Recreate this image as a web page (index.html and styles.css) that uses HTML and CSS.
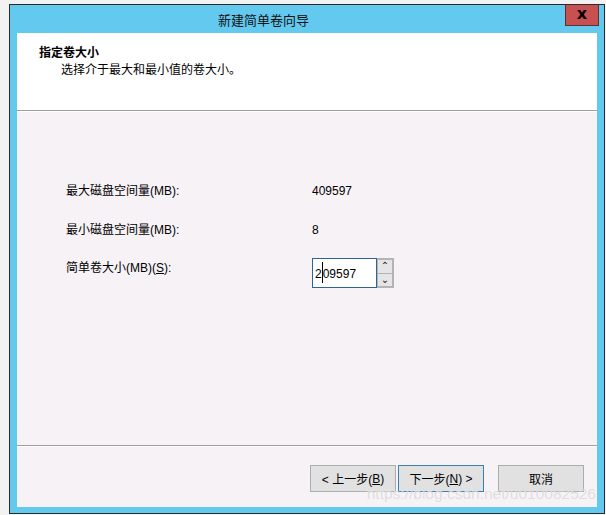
FILE: index.html
```html
<!DOCTYPE html>
<html lang="zh-CN">
<head>
    <meta charset="UTF-8">
    <title>新建简单卷向导</title>
    <link rel="stylesheet" href="styles.css">
</head>
<body>
    <!-- Окно мастера -->
    <div class="wizard">
        <div class="titlebar">
            <span class="title">新建简单卷向导</span>
            <span class="close">x</span>
        </div>
        <div class="content">
            <div class="header">
                <div class="header-title">指定卷大小</div>
                <div class="header-sub">选择介于最大和最小值的卷大小。</div>
            </div>
            <div class="main">
                <div class="row row-first">
                    <span class="label">最大磁盘空间量(MB):</span>
                    <span class="value">409597</span>
                </div>
                <div class="row row-second">
                    <span class="label">最小磁盘空间量(MB):</span>
                    <span class="value">8</span>
                </div>
                <div class="row row-third">
                    <span class="label label-size">简单卷大小(MB)(<u>S</u>):</span>
                    <div class="spinner">
                        <div class="spin-input">2<span class="caret"></span>09597</div>
                        <div class="spin-buttons">
                            <div class="spin-btn">&#8963;</div>
                            <div class="spin-btn">&#8964;</div>
                        </div>
                    </div>
                </div>
            </div>
            <div class="footer">
                <div class="btn btn-back">&lt; 上一步(<u>B</u>)</div>
                <div class="btn btn-next">下一步(<u>N</u>) &gt;</div>
                <div class="btn btn-cancel">取消</div>
                <div class="watermark">https://blog.csdn.net/u010082526</div>
            </div>
        </div>
    </div>
</body>
</html>
```

FILE: styles.css
```css
/* Body styling */
body {
    margin: 0;
    padding: 0;
    background: #f2f2f2;
    font-family: "Liberation Sans", "Noto Sans CJK SC", sans-serif;
    font-size: 12px;
    color: #000;
    overflow: hidden;
}

/* Wizard window */
.wizard {
    margin: 4px 0 0 9px;
    width: 596px;
    border: 1px solid #2b2b2b;
    background: #63c9ef;
    padding: 0 7px 6px 7px;
    box-sizing: border-box;
    height: 510px;
    display: flex;
    flex-direction: column;
}

.titlebar {
    height: 28px;
    display: flex;
    align-items: center;
    margin: 0 -7px;
}

.title {
    margin-left: 208px;
    font-size: 13px;
    color: #111;
}

.close {
    margin-left: auto;
    margin-right: 5px;
    align-self: flex-start;
    width: 34px;
    height: 21px;
    box-sizing: border-box;
    background: #c75050;
    border: 1px solid #5b3030;
    border-top: none;
    display: flex;
    align-items: center;
    justify-content: center;
    font-weight: bold;
    font-size: 16px;
    font-family: "DejaVu Sans", sans-serif;
    line-height: 1;
    padding-bottom: 3px;
}

/* Content */
.content {
    flex: 1;
    display: flex;
    flex-direction: column;
    background: #f6f2f6;
}

.header {
    height: 77px;
    background: #fff;
    border-bottom: 1px solid #a0a0a0;
    line-height: 17px;
}

.header-title {
    font-weight: bold;
    padding: 12px 0 0 22px;
}

.header-sub {
    padding-left: 44px;
}

.main {
    height: 333px;
    border-top: 1px solid #fff;
    border-bottom: 1px solid #a0a0a0;
    padding-left: 49px;
}

.row {
    display: flex;
    align-items: flex-start;
    line-height: 16px;
}

.row-first {
    margin-top: 71px;
}

.row-second {
    margin-top: 23px;
}

.row-third {
    margin-top: 20px;
}

.label {
    width: 246px;
}

.label-size {
    margin-top: 2px;
}

/* Spin box */
.spinner {
    display: flex;
}

.spin-input {
    width: 65px;
    height: 30px;
    box-sizing: border-box;
    border: 1px solid #2f6592;
    background: #fff;
    padding: 3px 0 0 2px;
    line-height: 16px;
}

.caret {
    display: inline-block;
    width: 1px;
    height: 21px;
    background: #000;
    vertical-align: -5px;
}

.spin-buttons {
    display: flex;
    flex-direction: column;
    width: 17px;
    height: 30px;
    box-sizing: border-box;
    border: 2px solid #b4b4b4;
    border-left-width: 1px;
    background: #b4b4b4;
    gap: 1px;
}

.spin-btn {
    flex: 1;
    background: #e5e5e5;
    display: flex;
    align-items: center;
    justify-content: center;
    font-size: 10px;
    font-family: "DejaVu Sans", sans-serif;
    line-height: 1;
    color: #222;
}

/* Footer */
.footer {
    flex: 1;
    border-top: 1px solid #fff;
    display: flex;
    align-items: flex-start;
    padding: 18px 13px 0 0;
    justify-content: flex-end;
    position: relative;
}

.btn {
    width: 86px;
    height: 27px;
    box-sizing: border-box;
    border: 1px solid #adadad;
    background: #e1e1e1;
    display: flex;
    align-items: center;
    justify-content: center;
}

.btn-next {
    margin-left: 2px;
    border-color: #3c7fb1;
}

.btn-cancel {
    margin-left: 14px;
}

.watermark {
    position: absolute;
    right: 1px;
    top: 38px;
    font-size: 15.5px;
    color: rgba(190, 190, 190, 0.5);
    text-shadow: 0 0 1px rgba(255, 255, 255, 0.9);
    font-family: "Liberation Sans", sans-serif;
}
```
